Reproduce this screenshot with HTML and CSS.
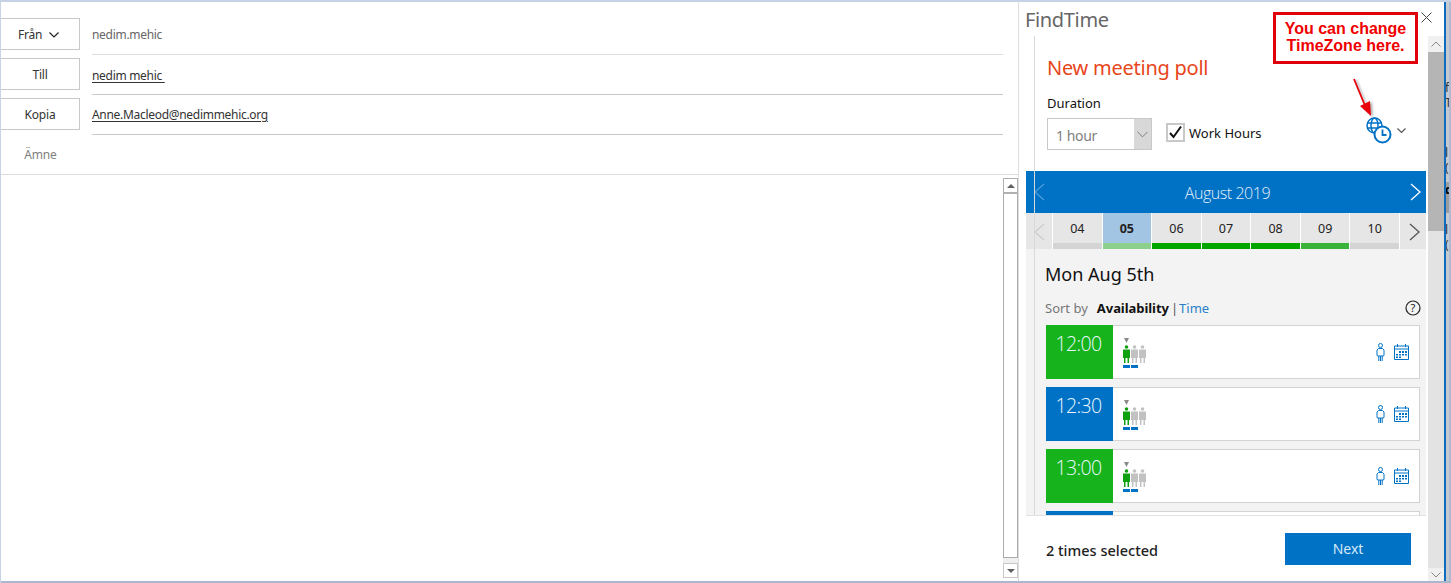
FILE: index.html
```html
<!DOCTYPE html>
<html lang="sv">
<head>
<meta charset="utf-8">
<title>FindTime</title>
<link rel="stylesheet" href="styles.css">
</head>
<body>
<svg class="defs" width="0" height="0" aria-hidden="true">
  <symbol id="people" viewBox="0 0 24 30">
    <path fill="#8a8a8a" d="M1 0h5L3.500 5z"/>
    <g fill="#0fa00f"><circle cx="3.500" cy="9" r="1.800"/><path d="M0 11.500h7v8.500H6v5H4.500v-5h-2v5H1v-5H0z"/></g>
    <g fill="#c2c2c2"><circle cx="11.500" cy="9" r="1.800"/><path d="M8 11.500h7v8.500h-1v5h-1.500v-5h-2v5H9v-5H8z"/><circle cx="19.500" cy="9" r="1.800"/><path d="M16 11.500h7v8.500h-1v5h-1.500v-5h-2v5H17v-5h-1z"/></g>
    <path fill="#0072c6" d="M0 27h7v3H0zM8 27h7v3H8z"/>
  </symbol>
  <symbol id="person" viewBox="0 0 9 18">
    <g fill="none" stroke="#0072c6"><circle cx="4.500" cy="2.500" r="2"/><path d="M2.500 5.500h4l1.500 1.500v5.500l-1 .5h-5l-1-.5V7zM2.800 13v5M4.500 13v5M6.200 13v5"/></g>
  </symbol>
  <symbol id="calendar" viewBox="0 0 15 16">
    <path fill="none" stroke="#0072c6" d="M.5 2h14v13.500H.5zM.5 5h14M3.500 0v3M11.500 0v3"/>
    <path fill="#0072c6" d="M5 7h2v2H5zM8 7h2v2H8zM11 7h2v2h-2zM2 10h2v1.500H2zM5 10h2v1.500H5zM8 10h2v1.500H8zM11 10h2v1.500h-2zM2 12.500h2V14H2zM5 12.500h2V14H5z"/>
  </symbol>
</svg>
<div class="topline"></div>
<div class="app">
  <main class="compose">
    <section class="headers">
      <div class="hrow">
        <button class="hbtn from">Från <svg class="chev" width="10" height="6" viewBox="0 0 10 6"><path d="M.5.500 5 5 9.500.500" fill="none" stroke="#222" stroke-width="1.200"/></svg></button>
        <div class="hval plain">nedim.mehic</div>
      </div>
      <div class="hrow">
        <button class="hbtn">Till</button>
        <div class="hval low"><u>nedim mehic&nbsp;</u></div>
      </div>
      <div class="hrow">
        <button class="hbtn">Kopia</button>
        <div class="hval"><u>Anne.Macleod@nedimmehic.org</u></div>
      </div>
      <div class="hrow subject">
        <span class="hlabel">Ämne</span>
      </div>
    </section>
    <section class="body-area">
      <div class="sb">
        <div class="sb-btn"><span class="tri up"></span></div>
        <div class="sb-thumb"></div>
        <div class="sb-gap"></div>
        <div class="sb-btn last"><span class="tri down"></span></div>
      </div>
    </section>
  </main>

  <aside class="pane">
    <header class="pane-title">
      <h1>FindTime</h1>
    </header>
    <div class="pane-scroll">
      <div class="poll-head">
        <h2>New meeting poll</h2>
        <label class="dur-label">Duration</label>
        <div class="controls">
          <div class="select"><span class="sel-text">1 hour</span><span class="sel-arrow"><svg width="11" height="7" viewBox="0 0 14 8"><path d="M.5.500 7 7 13.500.500" fill="none" stroke="#666"/></svg></span></div>
          <span class="check"><svg width="15" height="15" viewBox="0 0 15 15"><path d="M2 8l3.500 4L13 1.500" fill="none" stroke="#111" stroke-width="2"/></svg></span>
          <span class="check-label">Work Hours</span>
          <span class="tz">
            <svg width="26" height="27" viewBox="0 0 26 27"><g fill="none" stroke="#0072c6" stroke-width="1.500"><circle cx="8.500" cy="8.500" r="7.500"/><ellipse cx="8.500" cy="8.500" rx="3.500" ry="7.500"/><path d="M1 6h15M1 11h15"/></g><circle cx="16.500" cy="17.500" r="8" fill="#fff" stroke="#0072c6" stroke-width="2"/><path d="M16.500 12.500v5.500h4" fill="none" stroke="#0072c6" stroke-width="1.800"/></svg>
            <svg width="9" height="6" viewBox="0 0 9 6"><path d="M.5.500 4.500 4.500 8.500.500" fill="none" stroke="#555" stroke-width="1.200"/></svg>
          </span>
        </div>
      </div>
      <div class="month">
        <svg width="12" height="18" viewBox="0 0 12 18"><path d="M11 1 2 9l9 8" fill="none" stroke="#4d9cd8" stroke-width="1.300"/></svg>
        <span class="month-name">August 2019</span>
        <svg width="12" height="18" viewBox="0 0 12 18"><path d="m1 1 9 8-9 8" fill="none" stroke="#fff" stroke-width="1.300"/></svg>
      </div>
      <div class="days">
        <div class="d-nav"><svg width="12" height="18" viewBox="0 0 12 18"><path d="M11 1 2 9l9 8" fill="none" stroke="#ccc" stroke-width="1.300"/></svg></div>
        <div class="day none">04</div>
        <div class="day sel">05</div>
        <div class="day full">06</div>
        <div class="day full">07</div>
        <div class="day full">08</div>
        <div class="day most">09</div>
        <div class="day none">10</div>
        <div class="d-nav next-nav"><svg width="12" height="18" viewBox="0 0 12 18"><path d="m1 1 9 8-9 8" fill="none" stroke="#555" stroke-width="1.300"/></svg></div>
      </div>
      <div class="detail">
        <h3>Mon Aug 5th</h3>
        <div class="sort">
          <span class="s-label">Sort by</span>
          <b>Availability</b>
          <span class="s-sep">|</span>
          <span class="s-link">Time</span>
          <svg class="help" width="16" height="16" viewBox="0 0 16 16"><circle cx="8" cy="8" r="7" fill="none" stroke="#222" stroke-width="1.200"/><text x="8" y="12" text-anchor="middle" class="help-q">?</text></svg>
        </div>
        <div class="slot"><div class="time green">12:00</div><svg class="people" width="24" height="30"><use href="#people"/></svg><svg class="person" width="9" height="18"><use href="#person"/></svg><svg class="cal" width="15" height="16"><use href="#calendar"/></svg></div>
        <div class="slot"><div class="time blue">12:30</div><svg class="people" width="24" height="30"><use href="#people"/></svg><svg class="person" width="9" height="18"><use href="#person"/></svg><svg class="cal" width="15" height="16"><use href="#calendar"/></svg></div>
        <div class="slot"><div class="time green">13:00</div><svg class="people" width="24" height="30"><use href="#people"/></svg><svg class="person" width="9" height="18"><use href="#person"/></svg><svg class="cal" width="15" height="16"><use href="#calendar"/></svg></div>
        <div class="slot"><div class="time blue"></div></div>
      </div>
      <footer class="foot">
        <span class="count">2 times selected</span>
        <button class="next">Next</button>
      </footer>
      <div class="rail"></div>
    </div>
    <svg class="close" width="11" height="11" viewBox="0 0 11 11"><path d="M.5.500l10 10M10.500.500l-10 10" stroke="#444" fill="none"/></svg>
    <div class="callout">You can change<br>TimeZone here.</div>
    <svg class="arrow" width="24" height="44" viewBox="0 0 24 44"><path d="M2 1 L14 30" stroke="#e8000b" stroke-width="1.800" fill="none"/><path d="M8 28 L19 38 L18 23 Z" fill="#e8000b"/></svg>
  </aside>

  <div class="pane-sb">
    <div class="psb-btn"><svg width="10" height="6" viewBox="0 0 10 6"><path d="M.5 5.500 5 1l4.500 4.500" fill="none" stroke="#888"/></svg></div>
    <div class="psb-thumb"></div>
    <div class="psb-track"></div>
    <div class="psb-end"><svg width="10" height="6" viewBox="0 0 10 6"><path d="M.5.500 5 5 9.500.500" fill="none" stroke="#888"/></svg></div>
  </div>
  <div class="edge">
    <div class="edge-frag"></div>
    <div class="edge-text">
      <span class="g1">f</span>
      <span>T</span>
      <span class="g2">l</span>
      <span>(</span>
      <span class="g3">d</span>
      <span class="g4">l</span>
      <span>(</span>
    </div>
  </div>
</div>
<div class="botline"></div>
</body>
</html>
```
FILE: styles.css
```css
* { box-sizing: border-box; }
html, body { margin: 0; padding: 0; height: 583px; overflow: hidden; }
body { background: #fff; font-family: "Noto Sans", "Open Sans", sans-serif; color: #222; display: flex; flex-direction: column; border-left: 1px solid #c8d4e6; }
.defs { position: absolute; }
.topline { height: 2px; background: #c5d2e5; flex: none; }
.botline { height: 2px; background: #a9b7cf; flex: none; }
.app { flex: 1; display: flex; min-height: 0; }

.compose { width: 1018px; flex: none; display: flex; flex-direction: column; border-right: 1px solid #dedede; }
.headers { padding: 16px 0 0; border-bottom: 1px solid #dcdcdc; height: 173px; flex: none; display: flex; flex-direction: column; gap: 8px; }
.hrow { display: flex; height: 32px; align-items: stretch; gap: 12px; }
.hbtn { width: 79px; flex: none; background: #fff; border: 1px solid #c8c8c8; border-left: 0; font: 12px "Noto Sans", sans-serif; letter-spacing: -0.2px; color: #333; padding: 0; }
.hbtn.from { padding-right: 3px; }
.chev { margin-left: 4px; vertical-align: 1px; }
.hval { width: 911px; font-size: 12px; letter-spacing: -0.3px; line-height: 34px; color: #333; border-bottom: 1px solid #c8c8c8; height: 37px; }
.hval.low { line-height: 35px; }
.hval.plain { color: #666; border-bottom-color: #dcdcdc; }
.hval u { text-underline-offset: 2px; }
.subject { margin-top: 0; }
.hlabel { width: 79px; text-align: center; font-size: 12px; letter-spacing: -0.2px; line-height: 34px; color: #808080; }

.body-area { flex: 1; display: flex; justify-content: flex-end; padding: 3px 0 3px; }
.sb { width: 15px; display: flex; flex-direction: column; }
.sb-btn { height: 16px; flex: none; border: 1px solid #b0b0b0; border-bottom-width: 2px; display: flex; align-items: center; justify-content: center; background: #fff; }
.sb-btn.last { height: 15px; border-width: 1px; border-color: #c8c8c8; }
.sb-thumb { flex: 1; border: 1.500px solid #ababab; border-top: 0; background: #fff; }
.sb-gap { height: 5px; flex: none; background: #efefef; }
.tri { width: 0; height: 0; border-left: 4px solid transparent; border-right: 4px solid transparent; }
.tri.up { border-bottom: 4px solid #606060; }
.tri.down { border-top: 4px solid #606060; }

.pane { width: 409px; flex: none; position: relative; display: flex; flex-direction: column; background: #fff; }
.pane-title { height: 34px; flex: none; display: flex; align-items: center; padding: 0 0 0 6px; }
.pane-title h1 { margin: 0; font-weight: 400; font-size: 20px; letter-spacing: -0.35px; color: #666; }
.close { position: absolute; left: 402px; top: 10px; }
.pane-scroll { flex: 1; margin-left: 7px; width: 400px; display: flex; flex-direction: column; position: relative; min-height: 0; }
.rail { position: absolute; left: 8px; top: 0; bottom: 66px; width: 1px; background: #d9d9d9; }
.poll-head { height: 135px; flex: none; padding: 17px 0 0 21px; }
.poll-head h2 { margin: 0; font-weight: 400; font-size: 20px; letter-spacing: -0.25px; line-height: 30px; color: #e7461b; }
.dur-label { display: block; margin-top: 11px; font-size: 13px; line-height: 18px; color: #111; }
.controls { display: flex; align-items: center; margin-top: 6px; height: 32px; }
.select { width: 105px; height: 32px; border: 1px solid #c8c8c8; display: flex; justify-content: space-between; align-items: center; padding-left: 8px; font-size: 14px; color: #808080; }
.sel-text { letter-spacing: -0.4px; padding-top: 2px; }
.sel-arrow { width: 17px; height: 30px; background: #d8d8d8; display: flex; align-items: center; justify-content: center; }
.check { width: 19px; height: 19px; margin: -3px 4px 0 14px; border: 2px solid #c8c8c8; display: flex; align-items: center; justify-content: center; flex: none; }
.check-label { font-size: 13px; color: #111; margin-top: -2px; }
.tz { margin: -7px 20px 0 auto; display: flex; align-items: center; gap: 5px; }

.month { height: 42px; flex: none; background: #0072c6; color: #e4f0fa; display: flex; align-items: center; justify-content: space-between; padding: 0 4px 0 7px; }
.month-name { font: 300 16px "Open Sans", sans-serif; letter-spacing: -0.45px; padding-top: 2px; }
.days { height: 36px; flex: none; background: #fff; display: flex; gap: 1px; }
.d-nav { width: 26px; display: flex; align-items: center; justify-content: center; padding-top: 2px; flex: none; background: #e6e6e6; }
.next-nav { padding-left: 4px; }
.day { flex: 1; text-align: center; font-size: 12.500px; line-height: 31px; color: #222; background: #e6e6e6; border-bottom: 6px solid #d4d4d4; background-clip: padding-box; }
.day.sel { background-color: #a3c5e4; border-bottom-color: #8cd08c; font-weight: 700; }
.day.full { border-bottom-color: #00a500; }
.day.most { border-bottom-color: #39b339; }

.detail { flex: 1; min-height: 0; overflow: hidden; background: #f3f3f3; padding: 12px 6px 0 20px; border-bottom: 1px solid #e3e3e3; }
.detail h3 { margin: 0 0 0 -1px; font-weight: 400; font-size: 18px; line-height: 26px; color: #111; }
.sort { display: flex; align-items: center; margin: 9px 0 5px -1px; height: 24px; font-size: 13px; }
.sort b { margin-left: 9px; color: #111; letter-spacing: -0.05px; }
.s-label { color: #777; }
.s-sep { margin: 0 1px 0 2px; color: #555; }
.s-link { color: #2a7fc8; }
.help { margin-left: auto; margin-right: -1px; }
.help-q { font: 11px "Noto Sans", sans-serif; fill: #222; }
.slot { height: 54px; margin-bottom: 8px; background: #fff; border: 1px solid #d2d2d2; border-left: 0; display: flex; align-items: flex-start; flex: none; }
.time { width: 67px; height: 54px; margin-top: -1px; flex: none; color: #eaf7ff; font: 300 19.500px/38px "Open Sans", sans-serif; letter-spacing: -0.6px; text-align: center; padding-right: 2px; }
.time.green { background: #16b31c; }
.time.blue { background: #0072c6; }
.people { margin: 12px 0 0 10px; }
.person { margin: 17px 0 0 auto; }
.cal { margin: 18px 10px 0 9px; }

.foot { height: 65px; flex: none; display: flex; align-items: center; justify-content: space-between; padding: 0 15px 0 20px; }
.count { font-size: 14.500px; font-weight: 500; color: #222; margin-top: 3px; }
.next { width: 126px; height: 32px; background: #0072c6; border: 0; color: #d6e9f7; font: 14px "Noto Sans", sans-serif; }

.callout { position: absolute; left: 254px; top: 10px; width: 145px; height: 52px; border: 3px solid #e0000c; background: #fff; color: #f00000; font: 700 16px/17px "Liberation Sans", sans-serif; text-align: center; padding-top: 5px; }
.arrow { position: absolute; left: 333px; top: 76px; filter: drop-shadow(2px 1px 1px #b0b0b0); }

.pane-sb { width: 16px; flex: none; display: flex; flex-direction: column; padding-top: 34px; background: #fff; }
.psb-btn { height: 16px; background: #f0f0f0; display: flex; align-items: center; justify-content: center; flex: none; }
.psb-thumb { height: 179px; background: #b5b5b5; flex: none; }
.psb-track { flex: 1; background: #e3e3e3; }
.psb-end { height: 13px; background: #f0f0f0; display: flex; align-items: center; justify-content: center; flex: none; }
.edge { flex: 1; border-left: 2px solid #0f6cbd; border-right: 2px solid #adbad0; background: #c6cad0; position: relative; overflow: hidden; }
.edge-frag { position: absolute; left: 0; right: 0; top: 180px; height: 31px; background: #9c9c9c; }
.edge-text { position: relative; display: flex; flex-direction: column; padding-top: 78px; font: 12px/15px "Noto Sans", sans-serif; color: #333; margin-left: -1px; }
.edge-text .g2 { margin-top: 35px; }
.edge-text .g3 { margin-top: 7px; color: #000; font-weight: 700; }
.edge-text .g4 { margin-top: 25px; }
```
